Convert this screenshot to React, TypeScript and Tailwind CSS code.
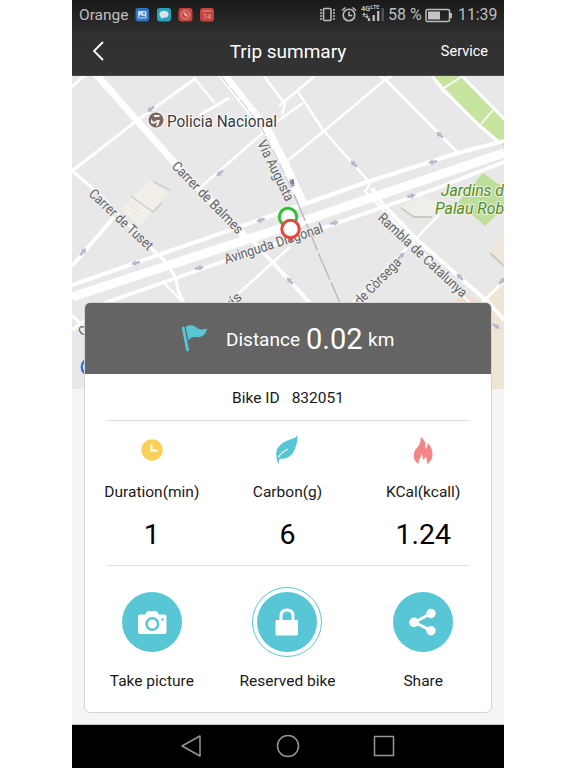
import React from "react";

type Road = { d: string; w: number };

const roads: Road[] = [
  { d: "M72 87L84 76", w: 3 },
  { d: "M72 171L139 119L196 78", w: 3 },
  { d: "M72 171L97 192L155 252L164 260L176 278L178 290L184 303", w: 3 },
  { d: "M195 79L215 103", w: 2 },
  { d: "M200 115L229 98", w: 3 },
  { d: "M264 76L285 104L282 114", w: 2.5 },
  { d: "M202 186L256 139L279 120L303 103", w: 2.5 },
  { d: "M279 106L315 76", w: 2.5 },
  { d: "M298 92L323 130L370 183L366 191", w: 2.5 },
  { d: "M286 162L324 131L386 79L392 76", w: 2.5 },
  { d: "M380 76L386 80L458 153", w: 3 },
  { d: "M72 266L114 217", w: 4 },
  { d: "M162 281L184 303", w: 2 },
  { d: "M239 293L290 247", w: 2.5 },
  { d: "M250 238L288 279L310 303", w: 4 },
  { d: "M440 214L398 257L350 305", w: 2.5 },
  { d: "M364 190L470 303", w: 2.5 },
  { d: "M372 188L378 199L416 239L488 302L504 320", w: 4 },
  { d: "M482 303L504 281", w: 3 },
  { d: "M99 305L222 262L323 228L435 189L504 162", w: 3.5 },
  { d: "M72 285L279 213L367 182L458 153L504 141", w: 4 },
  { d: "M94 72L172 160L246 238", w: 7 },
  { d: "M221 72L268 132L282 159L304 206", w: 9 },
  { d: "M72 297L285 227L504 153", w: 9 },
  { d: "M72 330L110 304", w: 4 },
  { d: "M72 315L96 340", w: 3 },
];

const arrows: [number, number, number][] = [
  [151, 109, 140], [220, 173, 140], [354, 164, 225], [440, 135, 220],
  [433, 162, 170], [261, 220, 160], [136, 263, 165], [199, 268, -12],
  [83, 252, -50], [334, 223, -12], [411, 196, -15], [401, 256, -45],
  [460, 277, 225], [290, 281, 225], [292, 183, 240], [496, 326, 35], [502, 281, -45],
];

const mapLabel = "fill-[#606264] font-['Roboto','Liberation_Sans',sans-serif] [paint-order:stroke] stroke-[#efefef] stroke-[2px]";
const parkLabel = "fill-[#548b24] font-['Roboto','Liberation_Sans',sans-serif] text-[16px] italic [paint-order:stroke] stroke-[#eef3e6] stroke-[2px]";

function CityMap() {
  return (
    <svg viewBox="72 76 432 313" className="block h-[313px] w-full bg-[#e8e8e8]">
      <path d="M434 76H461L506 122V148L494 138L478 123Z" fill="#c6e49e" />
      <path d="M483 173L504 188V208L485 226L458 202Z" fill="#bddf9b" />
      <path d="M475 303L504 275V389H475Z" fill="#efe5d6" />
      <path d="M450 303L466 294L482 303Z" fill="#f2ddcc" />
      <path d="M504 230L490 253L504 266Z" fill="#eee8dc" />
      <path d="M490 253L504 266" stroke="#ccc8c0" strokeWidth="2" />
      <path d="M121 209L149 180L168 194L139 226Z" fill="#f1efe8" />
      <path d="M131 196L153 212L162 203M154 182L170 190" fill="none" stroke="#cfccc6" strokeWidth="1.5" />
      <path d="M127 204l14 9M130 210l8 6" stroke="#d9d7d0" strokeDasharray="2 2" />
      <path d="M401 208L419 195L438 202L432 217H413Z" fill="#f0eee8" />
      <path d="M401 208L414 217H432" fill="none" stroke="#cccac6" strokeWidth="2" />
      <g fill="none" stroke="#fff" strokeLinejoin="round">
        {roads.map((r) => <path key={r.d} d={r.d} strokeWidth={r.w} />)}
        <path d="M462 76L506 121M432 76L443 90L480 126L500 143" strokeWidth="3" />
        <path d="M444 88L461 77M481 124L493 110" strokeWidth="1.6" />
      </g>
      <path d="M221 76L259 123L278 160L292 190" fill="none" stroke="#c4c4c4" strokeDasharray="13 2" />
      <path d="M294 194L309 230L320 257L340 303" fill="none" stroke="#b9b9b9" strokeWidth="1.4" strokeDasharray="29 3" />
      {arrows.map(([x, y, a]) => (
        <path key={`${x}-${y}`} transform={`translate(${x} ${y}) rotate(${a})`} d="M-4-1.3H0V-3L5 0L0 3V1.3H-4Z" fill="#b7b9cb" />
      ))}
      <path d="M290 182l3-3 1 5-2-1v4" fill="#7f83a4" stroke="#7f83a4" />

      <text transform="translate(171 167) rotate(45.5)" className={mapLabel} fontSize="14" textLength="95" lengthAdjust="spacingAndGlyphs">Carrer de Balmes</text>
      <text transform="translate(88 195) rotate(43)" className={mapLabel} fontSize="14" textLength="82" lengthAdjust="spacingAndGlyphs">Carrer de Tuset</text>
      <text transform="translate(257 143) rotate(64)" className={mapLabel} fontSize="14" textLength="66" lengthAdjust="spacingAndGlyphs">Via Augusta</text>
      <text transform="translate(226 264) rotate(-18)" className={mapLabel} fontSize="14" textLength="103" lengthAdjust="spacingAndGlyphs">Avinguda Diagonal</text>
      <text transform="translate(377 219) rotate(43)" className={mapLabel} fontSize="14" textLength="116" lengthAdjust="spacingAndGlyphs">Rambla de Catalunya</text>
      <text transform="translate(360 306) rotate(-45.5)" className={mapLabel} fontSize="14" textLength="60" lengthAdjust="spacingAndGlyphs">de Còrsega</text>
      <text transform="translate(231 309) rotate(-43)" className={mapLabel} fontSize="13.5" textLength="16" lengthAdjust="spacingAndGlyphs">rís</text>
      <text transform="translate(83 337) rotate(-43)" className={mapLabel} fontSize="13">C</text>
      <text x="441" y="196" className={parkLabel} textLength="63" lengthAdjust="spacingAndGlyphs">Jardins d</text>
      <text x="435" y="214" className={parkLabel} textLength="69" lengthAdjust="spacingAndGlyphs">Palau Rob</text>

      <circle cx="156" cy="120" r="9" fill="#f3f2f0" />
      <circle cx="156" cy="120" r="7.5" fill="#7c665f" />
      <path d="M154 115h6l-1 2h-5zM151 119l3 3 3-2h3l-2 6h-2l1-4-3 2-3-1z" fill="#f5efeb" />
      <text x="167" y="126.500" fontSize="16" className="fill-[#38393b] font-['Roboto','Liberation_Sans',sans-serif] [paint-order:stroke] stroke-white stroke-[2px]" textLength="110" lengthAdjust="spacingAndGlyphs">Policia Nacional</text>

      <path d="M288 235L281 221H295Z" fill="#35bd38" />
      <circle cx="288" cy="217" r="8.700" fill="#fff" stroke="#35bd38" strokeWidth="3" />
      <path d="M290.500 242L284 234H297Z" fill="#e04a40" />
      <circle cx="290.500" cy="229" r="8.700" fill="#fff" stroke="#e04a40" strokeWidth="3" />
      <circle cx="90" cy="367" r="8.200" fill="#fff" stroke="#3a6fe0" strokeWidth="2.500" />
    </svg>
  );
}

function StatusBar() {
  return (
    <div className="flex h-[30px] items-center pl-[7px] pr-[7px] text-[16px] leading-none text-[#bebebe]">
      <span className="w-[50px] pt-px text-[15.500px]">Orange</span>
      <svg viewBox="0 0 80 16" className="ml-[6px] h-4 w-20 shrink-0">
        <rect x="0.500" y="1" width="13.500" height="13.500" rx="3" fill="#2e75c6" />
        <rect x="3" y="4" width="8.500" height="7.500" rx="1" fill="#c8dcef" />
        <path d="M3.500 10.500l2-3 2 2 1.500-1 2 2z" fill="#2e75c6" />
        <circle cx="9" cy="6.200" r="1" fill="#2e75c6" />
        <rect x="22" y="1" width="14" height="13.500" rx="3" fill="#2ba2bd" />
        <ellipse cx="29" cy="7.300" rx="4.500" ry="3.500" fill="#d6e6e8" />
        <path d="M26 9v3l3-2z" fill="#d6e6e8" />
        <rect x="43.500" y="1" width="14" height="13.500" rx="3" fill="#c4443f" />
        <circle cx="50.500" cy="7.700" r="4.300" fill="none" stroke="#dfa29d" />
        <path d="M48 5.500l5 4.500M49 5l1 4 3-1z" stroke="#dfa29d" fill="#dfa29d" strokeWidth=".8" />
        <rect x="65" y="1" width="14" height="13.500" rx="3" fill="#c4443f" />
        <path d="M67.500 4h9" stroke="#dc9690" />
        <text x="72" y="12.300" textAnchor="middle" fontSize="7.500" fill="#e5aaa5" className="font-['Roboto',sans-serif]">14</text>
      </svg>
      <svg viewBox="318 0 68 30" className="ml-auto h-[30px] w-[68px] shrink-0" fill="none" stroke="#bebebe">
        <rect x="323.500" y="8.500" width="7.500" height="12" rx="1" strokeWidth="1.500" />
        <path d="M321 9v11M334 9v11" strokeWidth="1.500" strokeDasharray="2 1" />
        <circle cx="349" cy="15" r="5.800" strokeWidth="1.600" />
        <path d="M349 11.500v4h3.300M342 10.500l3.500-3M356 10.500l-3.500-3" strokeWidth="1.500" />
        <text x="361" y="11" fontSize="7.500" fill="#bebebe" stroke="none" className="font-['Roboto',sans-serif] font-bold">4G</text>
        <text x="370.500" y="9" fontSize="5.500" fill="#bebebe" stroke="none" className="font-['Roboto',sans-serif] font-bold" textLength="9" lengthAdjust="spacingAndGlyphs">LTE</text>
        <path d="M364 17v-3M367 14v4" />
        <path d="M362 15l2-2.500 2 2.500zM365 16l2 2.500 2-2.500z" fill="#bebebe" stroke="none" />
        <path d="M369 21v-3M373.700 21v-6M378.200 21v-10" strokeWidth="2.300" />
        <path d="M382.700 21V8" stroke="#555" strokeWidth="2.300" />
      </svg>
      <span className="ml-[2px] w-[33px] whitespace-nowrap">58 %</span>
      <svg viewBox="0 0 28 15" className="ml-[4px] h-[15px] w-7 shrink-0">
        <rect x="1" y="1.500" width="23.500" height="12" rx="1.500" fill="none" stroke="#bebebe" strokeWidth="1.500" />
        <rect x="3" y="3.500" width="12" height="8" fill="#c4c4c4" />
        <path d="M26 5v5" stroke="#bebebe" strokeWidth="2" />
      </svg>
      <span className="ml-[5px] w-[39px] text-[15.800px]">11:39</span>
    </div>
  );
}

const stats = [
  {
    label: "Duration(min)", value: "1",
    icon: <><circle cx="16" cy="16" r="10.700" fill="#fad058" /><path d="M15.500 10.500v6h6" fill="none" stroke="#fff" strokeWidth="2" /></>,
  },
  {
    label: "Carbon(g)", value: "6",
    icon: <><path d="M26.500 1C25 5 17 5 11.500 9C6 13 4.500 18 5.500 22C5.300 26 6.500 28 7.800 30.500C7.500 28 8 26 9 24.700C14 25.500 20 23 23 17C25.500 11 27 6 26.500 1Z" fill="#56c5d6" /><path d="M7.500 23.500C9.500 19 12.500 17.500 17 15" fill="none" stroke="#fff" strokeWidth="1.100" /></>,
  },
  {
    label: "KCal(kcall)", value: "1.24",
    icon: <path d="M13.500 3C19 6 19 11.500 18.500 15C20.500 13.500 20.500 11 20.500 9C24 12 26 17 25.500 21.500C25.200 25.500 23 28 20 30C20.500 27 19.500 24.500 18.700 22.500C18 24.500 17 25.500 15.800 26C16.200 23.500 15.500 21.500 14.500 20C14.500 24 10.500 25.500 12 30C8.500 28.500 6.500 25 6.800 21C7 17 9 15 11 12.500C13.500 9.500 14 6.500 13.500 3Z" fill="#f28585" />,
  },
];

const actions = [
  {
    label: "Take picture", ring: false,
    icon: <><path d="M18 22.500h5l2.500-3.500h9l2.500 3.500h5.500q2 0 2 2V40q0 2-2 2H18q-2 0-2-2V24.500q0-2 2-2Z" fill="#fff" /><circle cx="30.300" cy="32" r="5.800" fill="#fff" stroke="#58c6d5" strokeWidth="2.500" /><circle cx="40.500" cy="27.500" r="1.200" fill="#58c6d5" /></>,
  },
  {
    label: "Reserved bike", ring: true,
    icon: <><path d="M24 30v-6q0-6 6-6t6 6V30" fill="none" stroke="#fff" strokeWidth="3" /><rect x="18.500" y="28" width="22.500" height="15.500" rx="1" fill="#fff" /></>,
  },
  {
    label: "Share", ring: false,
    icon: <><path d="M38 21.500L21.500 30.300L38 38.700" fill="none" stroke="#fff" strokeWidth="3" /><circle cx="21" cy="30.300" r="4.800" fill="#fff" /><circle cx="38" cy="21.500" r="4.700" fill="#fff" /><circle cx="38" cy="38.700" r="4.700" fill="#fff" /></>,
  },
];

function TripCard() {
  return (
    <section className="relative z-10 mx-auto -mt-[87px] h-[411px] w-[408px] overflow-hidden rounded-[6px] border border-[#d5d5d5] bg-white text-[#191919]">
      <div className="-mx-px -mt-px flex h-[72px] items-center bg-[#646464] pl-[96px] text-white">
        <svg viewBox="0 0 28 28" className="h-7 w-7 shrink-0" fill="#58c6d5">
          <path d="M3.200 4L7.600 26" stroke="#58c6d5" strokeWidth="2.800" strokeLinecap="round" />
          <path d="M5.700 3C8 1 12 .5 15 2.500C18.500 5.500 22 6.500 27 4.500C26 9.500 23 13 18 13.200C14.500 13 11 12.500 8.500 16.500Z" />
        </svg>
        <div className="ml-[18px] flex items-center whitespace-nowrap pt-[3px] leading-none">
          <span className="w-[80px] text-[19px]">Distance</span>
          <span className="w-[62px] text-[29px]">0.02</span>
          <span className="text-[19px]">km</span>
        </div>
      </div>
      <div className="mx-[22px]">
        <div className="flex h-[47px] items-center justify-center border-b border-[#dedede] pt-[3px] text-[15.500px]">
          <span>Bike ID</span><span className="ml-[12px]">832051</span>
        </div>
        <div className="-mx-[23px] grid h-[144px] grid-cols-3 pr-px pt-[13px]">
          {stats.map((s) => (
            <div key={s.label} className="flex flex-col items-center">
              <svg viewBox="0 0 32 32" className="h-8 w-8">{s.icon}</svg>
              <span className="mt-[15px] text-[15.500px] leading-[22px]">{s.label}</span>
              <span className="mt-[14px] text-[28.500px] leading-[36px] text-black">{s.value}</span>
            </div>
          ))}
        </div>
        <div className="h-px bg-[#dedede]" />
        <div className="-mx-[23px] grid grid-cols-3 pr-px pt-[21px]">
          {actions.map((a) => (
            <div key={a.label} className="flex flex-col items-center">
              <div className={a.ring ? "rounded-full border border-[#58c6d5] p-1" : "p-[5px]"}>
                <svg viewBox="0 0 60 60" className="h-[60px] w-[60px] rounded-full bg-[#58c6d5]">{a.icon}</svg>
              </div>
              <span className="mt-[13px] text-[15.500px] leading-[22px]">{a.label}</span>
            </div>
          ))}
        </div>
      </div>
    </section>
  );
}

export default function App() {
  return (
    <div className="flex h-screen w-full justify-center overflow-hidden bg-white font-['Roboto','Liberation_Sans',sans-serif]">
      <main className="flex h-[768px] w-[432px] flex-col overflow-hidden bg-[#f5f5f5]">
        <header className="h-[76px] shrink-0 border-b border-[#484546] bg-linear-to-b from-[#191919] via-[#303030] via-45% to-[#333333] text-white">
          <StatusBar />
          <div className="grid h-[42px] grid-cols-[100px_1fr_100px] items-center">
            <svg viewBox="0 0 12 20" className="ml-[20px] h-5 w-3" fill="none" stroke="white" strokeWidth="1.800"><path d="M11 1L2 10L11 19" /></svg>
            <h1 className="text-center text-[19px] leading-none">Trip summary</h1>
            <span className="pr-[16px] pt-[2px] text-right text-[14.500px]">Service</span>
          </div>
        </header>
        <div className="h-[649px] shrink-0 border-b border-[#c8caca]">
          <CityMap />
          <TripCard />
        </div>
        <nav className="flex h-[43px] shrink-0 items-center justify-center gap-[72px] bg-black pb-px">
          {["M20 2V22L2 12Z", "M12 1.500A10.500 10.500 0 1 1 12 22.500A10.500 10.500 0 1 1 12 1.500Z", "M2.500 2.500H21.500V21.500H2.500Z"].map((d) => (
            <svg key={d} viewBox="0 0 24 24" className="h-6 w-6" fill="none" stroke="#969696" strokeWidth="1.500" strokeLinejoin="round"><path d={d} /></svg>
          ))}
        </nav>
      </main>
    </div>
  );
}
